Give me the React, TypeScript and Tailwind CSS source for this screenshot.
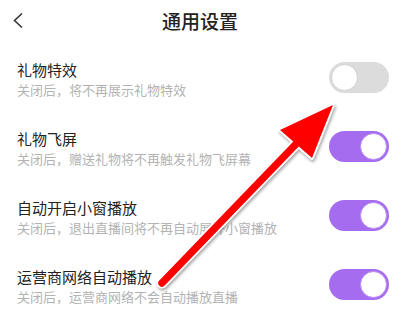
import React from 'react'

const rows = [
  { title: '礼物特效', desc: '关闭后，将不再展示礼物特效', on: false },
  { title: '礼物飞屏', desc: '关闭后，赠送礼物将不再触发礼物飞屏幕', on: true },
  { title: '自动开启小窗播放', desc: '关闭后，退出直播间将不再自动展开小窗播放', on: true },
  { title: '运营商网络自动播放', desc: '关闭后，运营商网络不会自动播放直播', on: true },
]

function Toggle({ on }: { on: boolean }) {
  return (
    <div
      className={`relative h-[31px] w-[60px] shrink-0 rounded-full ${
        on ? 'bg-[#a66cf0]' : 'bg-[#dcdcdc]'
      }`}
    >
      <div
        className={`absolute top-[2px] h-[27px] w-[27px] rounded-full bg-white ${
          on ? 'right-[2px] border border-[#b58af2]' : 'left-[2px] border border-[#d0d0d0]'
        }`}
      />
    </div>
  )
}

export default function App() {
  return (
    <div
      className="relative h-[331px] w-[400px] overflow-hidden bg-white"
      style={{ fontFamily: '"Noto Sans CJK SC", "Noto Sans", sans-serif' }}
    >
      {/* Header */}
      <header className="relative flex h-[40px] items-center justify-center">
        <svg className="absolute left-[12px] top-[12px]" width="12" height="17" viewBox="0 0 12 17">
          <path d="M10 1.5 L2.5 8.5 L10 15.5" fill="none" stroke="#333" strokeWidth="1.6" />
        </svg>
        <h1 className="text-[19px] font-medium leading-none text-[#222]">通用设置</h1>
      </header>

      {/* Settings list */}
      <div className="pt-[3px]">
        {rows.map((r) => (
          <div key={r.title} className="flex h-[69px] items-center justify-between pl-[17px] pr-[11px]">
            <div className="mt-[4px]">
              <div className="text-[15px] leading-[20px] text-[#222]">{r.title}</div>
              <div className="mt-[1px] text-[13px] leading-[18px] text-[#b3b3b3]">{r.desc}</div>
            </div>
            <Toggle on={r.on} />
          </div>
        ))}
      </div>

      {/* Annotation arrow */}
      <svg
        className="pointer-events-none absolute left-0 top-0"
        width="400"
        height="331"
        viewBox="0 0 400 331"
        style={{ filter: 'drop-shadow(1px 2px 1.5px rgba(0,0,0,0.35))' }}
      >
        <line x1="162" y1="283" x2="298" y2="142" stroke="#fff" strokeWidth="11" strokeLinecap="round" />
        <polygon points="333,105 280,130 312,158" fill="#fff" stroke="#fff" strokeWidth="4" strokeLinejoin="round" />
        <line x1="162" y1="283" x2="298" y2="142" stroke="#ff0000" strokeWidth="7.5" strokeLinecap="round" />
        <polygon points="333,105 280,130 312,158" fill="#ff0000" />
      </svg>
    </div>
  )
}
